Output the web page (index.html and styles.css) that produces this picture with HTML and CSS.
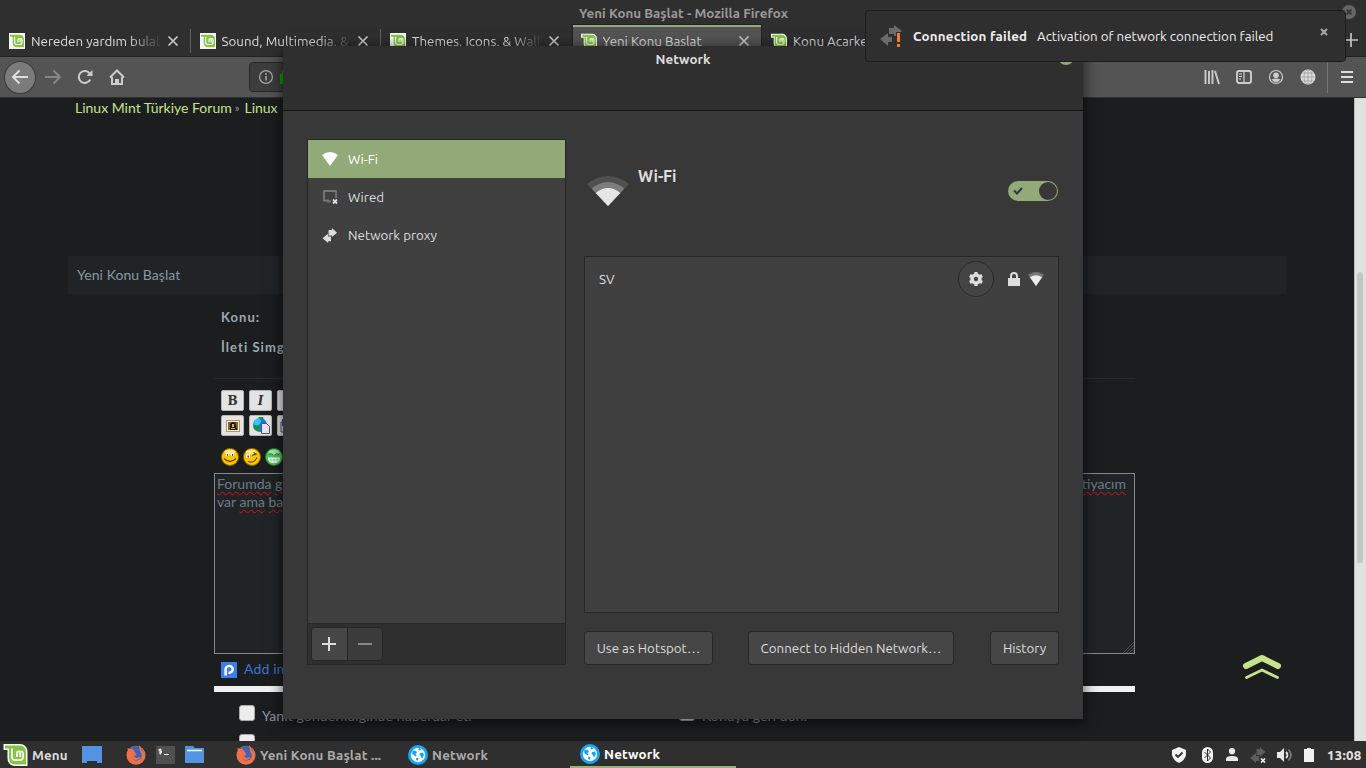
FILE: index.html
```html
<!DOCTYPE html>
<html lang="tr">
<head>
  <meta charset="UTF-8" />
  <title>Yeni Konu Başlat - Mozilla Firefox</title>
  <link rel="stylesheet" href="styles.css">
</head>
<body>
  <svg class="defs" width="0" height="0">
    <symbol id="mint" viewBox="0 0 24 24">
      <path d="M0 1h16c5 0 8 3 8 8v14H12c-5 0-8-3-8-8V7H0z" fill="#fff"/>
      <path d="M1.500 2.500h14.500c4 0 6.500 2.500 6.500 6.500v12.500H12c-4 0-6.500-2.500-6.500-6.500V5.500h-4z" fill="#86c543"/>
      <path d="M8.500 5.500v8.500c0 2 1.200 3.200 3.200 3.200h4.600c2 0 3.200-1.200 3.200-3.200V10.500c0-2.600-2.800-2.600-2.800-.2V14M16.700 10.300c0-2.600-3.200-2.600-3.200 0V14" fill="none" stroke="#fff" stroke-width="1.700"/>
    </symbol>
    <symbol id="x" viewBox="0 0 12 12"><path d="M1.500 1.500l9 9M10.500 1.500l-9 9" stroke="#c8c8c8" stroke-width="1.700"/></symbol>
    <symbol id="firefox" viewBox="0 0 20 20">
      <circle cx="10" cy="10.300" r="9.500" fill="#f0704a"/>
      <path d="M3.500 4C6 1 11 0 14 2c3 2 4 5 3 8s-4 6-7 5.500-5-2-4.500-4l4-1 1-2-3-1 1-2z" fill="#3d63b5"/>
      <path d="M1.500 3L4 4l3-.5-.5 2.500 3 1-2 2v2l3 2 4-1c-1 3-5 4-8 2S2 9 1.500 3zM13 0c2 2 3 4 3 7l1-2 1 4-1 4-2 2c1-4 1-6-1-9z" fill="#f0704a"/>
    </symbol>
    <symbol id="globe" viewBox="0 0 20 20">
      <circle cx="10" cy="10" r="10" fill="#16a5f3"/><circle cx="10" cy="10" r="7.200" fill="#fff"/>
      <path d="M4.500 5.500L8 6l1 1.500L7.500 9l1 1.500-1 1L5 9.500l-1-1zM11 3l2.500 1L12 5.500l-1.500-.5zM12 8l3-.5 1 2.500-1.500 3-1.500-.5V11l-1.500-1zM8.500 12.500l2 .8-1 2.700L8 15z" fill="#16a5f3"/>
    </symbol>
    <symbol id="arrows" viewBox="0 0 16 16">
      <path d="M6.500 2H10V0l5.500 5L10 9.500V8H6.500z"/><path d="M9 14H6v2L0 11l6-5v3h3z"/>
    </symbol>
  </svg>

  <div class="desktop">
    <main class="browser">
      <header class="titlebar"><span>Yeni Konu Başlat - Mozilla Firefox</span></header>
      <nav class="tabs">
        <div class="tab"><i class="fav"><svg><use href="#mint"/></svg></i><span class="fade">Nereden yardım bulab</span><svg class="close"><use href="#x"/></svg></div>
        <div class="tab"><i class="fav"><svg><use href="#mint"/></svg></i><span class="fade">Sound, Multimedia, &amp;</span><svg class="close"><use href="#x"/></svg></div>
        <div class="tab plain"><i class="fav"><svg><use href="#mint"/></svg></i><span class="fade">Themes, Icons, &amp; Wall</span><svg class="close"><use href="#x"/></svg></div>
        <div class="tab active"><i class="fav clear"><svg><use href="#mint"/></svg></i><span class="fade">Yeni Konu Başlat</span><svg class="close"><use href="#x"/></svg></div>
        <div class="tab plain"><i class="fav clear"><svg><use href="#mint"/></svg></i><span>Konu Açarken</span></div>
        <svg class="newtab" viewBox="0 0 14 14"><path d="M7 0v14M0 7h14" stroke="#c4c4c4" stroke-width="1.700"/></svg>
      </nav>
      <div class="toolbar">
        <div class="back"><svg width="18" height="16" viewBox="0 0 18 16"><path d="M17 8H2M8.500 1.500L2 8l6.500 6.500" fill="none" stroke="#ddd" stroke-width="2"/></svg></div>
        <svg class="fwd" width="18" height="16" viewBox="0 0 18 16"><path d="M1 8h15M9.500 1.500L16 8l-6.500 6.500" fill="none" stroke="#858585" stroke-width="2"/></svg>
        <svg class="reload" width="16" height="16" viewBox="0 0 16 16"><path d="M13.200 10.500A6 6 0 1 1 13 5" fill="none" stroke="#ccc" stroke-width="2"/><path d="M15.500 1v6h-6z" fill="#ccc"/></svg>
        <svg class="home" width="16" height="16" viewBox="0 0 16 16"><path d="M1 8.500L8 1.500l7 7M3 8v7h10V8" fill="none" stroke="#ccc" stroke-width="2"/><path d="M6 15v-5h4v5" fill="#ccc"/></svg>
        <div class="url"><svg width="14" height="14" viewBox="0 0 14 14"><circle cx="7" cy="7" r="6.400" fill="none" stroke="#aaa" stroke-width="1.200"/><path d="M7 6v4.500M7 3v1.700" stroke="#aaa" stroke-width="1.500"/></svg><svg width="14" height="16" viewBox="0 0 14 16"><path d="M0 5h2V2h8v3h3v10H0z" fill="#12a004"/></svg></div>
        <div class="tools">
          <svg width="16" height="16" viewBox="0 0 16 16"><path d="M1.500 1v14M5 2v13M8.500 1v14M11 2l4 13" stroke="#ccc" stroke-width="1.900"/></svg>
          <svg width="16" height="16" viewBox="0 0 16 16"><rect x="1" y="2" width="14" height="12" rx="2" fill="none" stroke="#ccc" stroke-width="1.900"/><path d="M8 2v12M3 5h3M3 7.500h3M3 10h2" stroke="#ccc" stroke-width="1.200"/></svg>
          <svg width="16" height="16" viewBox="0 0 16 16"><circle cx="8" cy="8" r="6.500" fill="none" stroke="#ccc" stroke-width="1.200"/><circle cx="8" cy="6.300" r="2.800" fill="#ccc"/><path d="M3.500 10.500q4.500-2 9 0-4.500 5.500-9 0z" fill="#ccc"/></svg>
          <svg width="16" height="16" viewBox="0 0 16 16"><circle cx="8" cy="8" r="7.500" fill="#dcdcdc"/><path d="M8 0v16M0 8h16M2 4h12M2 12h12" stroke="#999" stroke-width=".7"/><ellipse cx="8" cy="8" rx="4" ry="7.500" fill="none" stroke="#999" stroke-width=".7"/></svg>
          <i class="sep"></i>
          <svg width="14" height="14" viewBox="0 0 14 14"><path d="M1 2h12M1 7h12M1 12h12" stroke="#ddd" stroke-width="2"/></svg>
        </div>
      </div>
      <div class="view">
        <div class="forum">
          <div class="crumbs"><span>Linux Mint Türkiye Forum</span><small>»</small><span>Linux</span></div>
          <h3 class="heading"><span>Yeni Konu Başlat</span></h3>
          <form class="post">
            <div class="field">Konu:</div>
            <div class="field">İleti Simgesi:</div>
            <hr>
            <div class="bbc">
              <b class="btn serif">B</b><b class="btn serif ital">I</b><b class="btn"></b>
            </div>
            <div class="bbc">
              <b class="btn"><svg width="14" height="12" viewBox="0 0 14 12"><rect x=".5" y=".5" width="13" height="11" fill="#fff8ea" stroke="#c98b56"/><path d="M2 2h10v8H2z" fill="#6d6b36"/><path d="M4 10V4l2-2h3l2 8z" fill="#211b10"/><path d="M6 4h2v3H6zM5 8h4v1H5z" fill="#d2ad73"/></svg></b>
              <b class="btn"><svg width="18" height="18" viewBox="0 0 18 18"><circle cx="8" cy="8" r="7" fill="#1378ef"/><path d="M1 7l3-5 4-1 1 4-3 4z" fill="#35c4f2"/><path d="M6 0l5 0 1 3-4-1zM1 10l4-2 3 3-2 3-3-1z" fill="#169a20"/><path d="M9.500 6.500h5l3 3v7h-8z" fill="#e4e4ff" stroke="#555"/></svg></b>
              <b class="btn"><svg width="18" height="14" viewBox="0 0 18 14"><path d="M1 3h8v10H1z" fill="#dde" stroke="#555"/><path d="M2 0h7v7H2z" fill="#2050cf"/></svg></b>
            </div>
            <div class="smileys">
              <svg viewBox="0 0 18 18"><circle cx="9" cy="9" r="8.500" fill="#ffc400" stroke="#8f6300"/><ellipse cx="9" cy="4" rx="5.500" ry="2.500" fill="#ffe583"/><path d="M5 5h3v3H5zM10 5h3v3h-3z" fill="#fff"/><path d="M6 6h1v2H6zM11 6h1v2h-1z" fill="#704300"/><path d="M3 10.500q6 6 12 0" fill="none" stroke="#704300" stroke-width="1.200"/></svg>
              <svg viewBox="0 0 18 18"><circle cx="9" cy="9" r="8.500" fill="#ffc400" stroke="#8f6300"/><ellipse cx="8" cy="4" rx="5" ry="2.500" fill="#ffe583"/><path d="M3 6.500h4v3.500H3z" fill="#fff"/><path d="M4.500 7.500h1.500v2H4.500z" fill="#704300"/><path d="M9 7.500l4-1.500-2.500-1.500M5 13.500q6 2.500 9-4" fill="none" stroke="#704300" stroke-width="1.200"/></svg>
              <svg viewBox="0 0 18 18"><circle cx="9" cy="9" r="8.500" fill="#47c95c" stroke="#20742d"/><ellipse cx="9" cy="4" rx="5.500" ry="2.500" fill="#a4e8ab"/><path d="M3 9.500h12q0 5.500-6 5.500t-6-5.500z" fill="#fff"/><path d="M4 7q2-3 4 0M10 7q2-3 4 0" fill="none" stroke="#29813a"/><path d="M6 10v4M9 10v5M12 10v4M4 12h10" fill="none" stroke="#77bb80" stroke-width=".6"/></svg>
            </div>
            <div class="message">
              <p><span><u>Forumda</u> <u>g</u></span><u>tiyacım</u></p>
              <p><span>var <u>ama</u> <u>ba</u></span></p>
              <svg class="grip" width="11" height="11" viewBox="0 0 11 11"><path d="M0 11L11 0M3 11l8-8M6 11l5-5M9 11l2-2" stroke="#555" stroke-width=".8"/></svg>
            </div>
            <div class="addimg"><svg width="16" height="16" viewBox="0 0 16 16"><path d="M0 0h16v16H0z" fill="#3b7ded"/><path d="M4.600 13.500V7.500a3.600 3.400 0 1 1 3.600 3.200H7.500" fill="none" stroke="#fff" stroke-width="2.400"/></svg><span>Add image to post</span></div>
            <div class="whitebar"></div>
            <div class="options">
              <label><i class="check"></i><span>Yanıt gönderildiğinde haberdar et.</span></label>
              <label><i class="check"></i><span>Konuya geri dön.</span></label>
              <label><i class="check"></i></label>
            </div>
          </form>
          <svg class="totop" width="40" height="26" viewBox="0 0 40 26"><path d="M4 12L20 4l16 8" fill="none" stroke="#c5e38b" stroke-width="6" stroke-linecap="round" stroke-linejoin="round"/><path d="M4.500 23.500L20 16l15.500 7.500" fill="none" stroke="#c5e38b" stroke-width="2.800" stroke-linecap="round"/></svg>
        </div>
        <div class="scroll"><i></i></div>
      </div>
    </main>

    <footer class="panel">
      <div class="menu"><svg width="25" height="24"><use href="#mint"/></svg><span>Menu</span></div>
      <div class="launchers">
        <svg width="20" height="17" viewBox="0 0 20 17"><path d="M0 0h20v17h-5v-2H5v2H0z" fill="#5294e2"/></svg>
        <svg width="20" height="20"><use href="#firefox"/></svg>
        <svg width="19" height="18" viewBox="0 0 19 18"><path d="M0 0h19v18H0z" fill="#505050"/><path d="M5.500 3.500H3V5h2.500v2H3M4.300 2.500v6M8 8.500h5" fill="none" stroke="#fff"/></svg>
        <svg width="19" height="17" viewBox="0 0 19 17"><path d="M0 0h8l2 2h9v15H0z" fill="#5294e2"/><path d="M2 4.500h15" stroke="#fff" stroke-width="1.500"/></svg>
      </div>
      <div class="task"><svg width="20" height="20"><use href="#firefox"/></svg><span>Yeni Konu Başlat ...</span></div>
      <div class="task"><svg width="20" height="20"><use href="#globe"/></svg><span>Network</span></div>
      <div class="task current"><svg width="20" height="20"><use href="#globe"/></svg><span>Network</span></div>
      <div class="tray">
        <svg width="14" height="16" viewBox="0 0 14 16"><path d="M7 0l7 3v5q-1 5-7 8Q1 13 0 8V3z" fill="#f2f2f2"/><path d="M3.500 7.500L6 10l4.500-4.500" fill="none" stroke="#2f2f2f" stroke-width="1.800"/></svg>
        <svg class="bt" width="11" height="16" viewBox="0 0 11 16"><rect width="11" height="16" rx="5.500" fill="#f2f2f2"/><path d="M2.500 5l6 6-3 3V2l3 3-6 6" fill="none" stroke="#2f2f2f"/></svg>
        <svg class="user" width="12" height="13" viewBox="0 0 12 13"><circle cx="6" cy="3.200" r="3.100" fill="#e8e8e8"/><path d="M0 13v-2q0-3 6-3t6 3v2z" fill="#e8e8e8"/></svg>
        <svg width="16" height="16" viewBox="0 0 16 16"><use href="#arrows" fill="#5d5d5d"/><path d="M9 10h7v6H9z" fill="#2f2f2f"/><path d="M11 11.500l4 4M15 11.500l-4 4" stroke="#eee" stroke-width="1.700"/></svg>
        <svg width="16" height="14" viewBox="0 0 16 14"><path d="M0 4h3l4-4v14l-4-4H0z" fill="#e8e8e8"/><path d="M9 4q3 3 0 6" fill="none" stroke="#e8e8e8" stroke-width="1.800"/><path d="M11.500 1.500q5 5.500 0 11" fill="none" stroke="#777" stroke-width="1.700"/></svg>
        <svg width="10" height="14" viewBox="0 0 10 14"><path d="M0 1h3V0h4v1h3v13H0z" fill="#f2f2f2"/></svg>
        <b class="clock">13:08</b>
      </div>
    </footer>

    <section class="dialog">
      <header>Network<i></i></header>
      <div class="content">
        <aside>
          <ul>
            <li class="sel"><svg width="16" height="14" viewBox="0 0 16 14"><path d="M0 3q8-6 16 0L8 14z" fill="#fff"/></svg><span>Wi-Fi</span></li>
            <li><svg width="16" height="16" viewBox="0 0 16 16"><path d="M9 12.500H6v-1H2V2h12v7" fill="none" stroke="#777" stroke-width="1.800"/><path d="M11 10.500l4 4M15 10.500l-4 4" stroke="#ddd" stroke-width="1.800"/></svg><span>Wired</span></li>
            <li><svg width="16" height="15" fill="#ddd"><use href="#arrows"/></svg><span>Network proxy</span></li>
          </ul>
          <div class="edit"><button><svg width="14" height="14" viewBox="0 0 14 14"><path d="M7 0v14M0 7h14" stroke="#ddd" stroke-width="2"/></svg></button><button class="off"><svg width="14" height="14" viewBox="0 0 14 14"><path d="M0 7h14" stroke="#888" stroke-width="2"/></svg></button></div>
        </aside>
        <div class="main">
          <div class="device">
            <svg width="42" height="30" viewBox="0 0 42 30"><path d="M0 8Q21-8 42 8L21 30z" fill="#505050"/><path d="M4.500 12.500q16.500-13 33 0L21 30z" fill="#7d7d7d"/><path d="M8.700 17q12.300-10 24.600 0L21 30z" fill="#e5e5e5"/></svg>
            <strong>Wi-Fi</strong>
            <div class="switch"><svg width="10" height="8" viewBox="0 0 10 8"><path d="M1 3.500l3 3L9 1" fill="none" stroke="#2f3946" stroke-width="2"/></svg><i></i></div>
          </div>
          <div class="aps">
            <div class="ap"><span>SV</span>
              <div class="gear"><svg width="14" height="14" viewBox="0 0 14 14"><circle cx="7" cy="7" r="4" fill="none" stroke="#ddd" stroke-width="3.600"/><path d="M7 0v3M7 11v3M.9 3.500l2.600 1.500M10.500 9l2.600 1.500M13.100 3.500L10.500 5M3.500 9L.9 10.500" stroke="#ddd" stroke-width="3.200"/></svg></div>
              <svg class="lock" width="12" height="14" viewBox="0 0 12 14"><path d="M0 6h12v8H0z" fill="#ddd"/><path d="M3 7V4a3 3 0 0 1 6 0v3" fill="none" stroke="#ddd" stroke-width="2"/></svg>
              <svg width="16" height="14" viewBox="0 0 16 14"><path d="M0 3q8-6 16 0L8 14z" fill="#777"/><path d="M2 5.300q6-4 12 0L8 14z" fill="#eee"/></svg>
            </div>
          </div>
          <div class="actions"><button class="b1">Use as Hotspot…</button><button class="b2">Connect to Hidden Network…</button><button class="b3">History</button></div>
        </div>
      </div>
    </section>

    <div class="winclose"><svg width="14" height="14" viewBox="0 0 14 14"><circle cx="7" cy="7" r="7" fill="#666"/><path d="M4.500 4.500l5 5M9.500 4.500l-5 5" stroke="#2f2f2f" stroke-width="1.600"/></svg></div>
    <div class="notify">
      <svg width="24" height="24" viewBox="0 0 24 24"><path d="M9 4h5V1l8 6-5 5h-3v-2H9zM12 18H8v4L0 15l8-6v4h4z" fill="#6b6b6b"/><path d="M16 8h6v16h-6z" fill="#2f2f2f"/><path d="M17 9h3v9h-3zM17 20h3v3h-3z" fill="#f27835"/></svg>
      <b>Connection failed</b><span>Activation of network connection failed</span>
      <svg class="nclose" width="8" height="8" viewBox="0 0 8 8"><path d="M1 1l6 6M7 1L1 7" stroke="#aaa" stroke-width="2"/></svg>
    </div>
  </div>
</body>
</html>
```
FILE: styles.css
```css
* {
  box-sizing: border-box;
}
body {
  margin: 0;
  overflow: hidden;
  background: #1c1d1f;
  font-family: Ubuntu, "Noto Sans", sans-serif;
  font-size: 13.350px;
  color: #ddd;
}
svg {
  display: block;
  flex: none;
}
.defs {
  position: absolute;
}
.desktop {
  position: relative;
  width: 1366px;
  height: 768px;
  display: flex;
  flex-direction: column;
}
span, b {
  white-space: nowrap;
}
.browser {
  height: 741px;
  display: flex;
  flex-direction: column;
  overflow: hidden;
}
.titlebar {
  height: 24px;
  background: #2f2f2f;
  color: #999;
  font-weight: 600;
  line-height: 28px;
  padding-left: 1px;
  text-align: center;
}
.tabs {
  height: 33px;
  background: #2f2f2f;
  border-bottom: 1px solid #202020;
  display: flex;
  align-items: center;
}
.tab {
  width: 190.500px;
  height: 32px;
  flex: none;
  display: flex;
  align-items: center;
  padding: 2px 12px 0 9px;
  position: relative;
}
.tab span {
  padding-top: 1px;
}
.tab::after {
  content: "";
  position: absolute;
  right: 0;
  top: 5px;
  height: 24px;
  border-right: 1px solid #606060;
}
.tab.plain::after, .tab.active::after {
  display: none;
}
.active {
  background: #545454;
  border: 1px solid #202020;
  border-bottom: 0;
  box-shadow: inset 0 2px #92a978;
  padding: 1px 11px 0 8px;
}
.fav {
  width: 16px;
  height: 16px;
  background: #f4f4f4;
  flex: none;
  margin-right: 6px;
}
.fav svg {
  width: 16px;
  height: 16px;
}
.clear {
  background: none;
}
.fade {
  width: 131px;
  overflow: hidden;
  mask-image: linear-gradient(90deg, #000 75%, transparent);
}
.active .fade {
  mask-image: none;
}
.close {
  width: 12px;
  height: 12px;
  margin-left: auto;
}
.newtab {
  width: 14px;
  height: 14px;
  margin-left: auto;
  margin-right: 8px;
}
.toolbar {
  height: 41px;
  background: #545454;
  border-bottom: 1px solid #303030;
  display: flex;
  align-items: center;
  padding-left: 4px;
}
.back {
  width: 32px;
  height: 33px;
  border-radius: 50%;
  border: 1px solid #393939;
  background: #7b7b7b;
  display: flex;
  align-items: center;
  justify-content: center;
}
.fwd {
  margin-left: 8px;
}
.reload {
  margin-left: 15px;
}
.home {
  margin-left: 16px;
}
.url {
  width: 800px;
  height: 30px;
  margin-left: 124px;
  background: #3d3d3d;
  border: 1px solid #282828;
  border-radius: 4px;
  padding-left: 9px;
  display: flex;
  align-items: center;
  gap: 7px;
}
.tools {
  display: flex;
  align-items: center;
  gap: 16px;
  margin-left: auto;
  margin-right: 12px;
}
.sep {
  height: 32px;
  border-left: 1px solid #777;
  margin: 0 -4px 0 -5px;
}
.view {
  flex: 1;
  display: flex;
  min-height: 0;
}
.forum {
  width: 1354px;
  position: relative;
  padding: 0 68px;
  font-family: "Proxima Nova", Lato, sans-serif;
  font-size: 14px;
}
.crumbs {
  height: 158px;
  padding-left: 7px;
  color: #c5e38b;
  line-height: 19px;
  display: flex;
}
.crumbs small {
  margin: 0 5px 0 3px;
  font-size: 11px;
  color: #8998a1;
}
.heading {
  margin: 0;
  height: 38px;
  line-height: 37px;
  padding-left: 9px;
  background: #202427;
  font-weight: 400;
  font-size: 14px;
  color: #8998a1;
}
.heading span {
  letter-spacing: 0.060px;
}
.post {
  width: 921px;
  margin: 8px 0 0 146px;
}
.field {
  height: 30px;
  line-height: 30px;
  padding-left: 7px;
  color: #9aa9b3;
  font-weight: 700;
  font-size: 13px;
  letter-spacing: 1.050px;
}
.post hr {
  border: 0;
  border-top: 1px solid #27292b;
  margin: 16px 0 11px;
}
.bbc {
  display: flex;
  gap: 5px;
  padding-left: 7px;
  margin-bottom: 4px;
}
.btn {
  width: 23px;
  height: 21px;
  border: 1px solid #b5b5b5;
  border-radius: 2px;
  background: #e4e4e4;
  display: flex;
  align-items: center;
  justify-content: center;
  color: #333;
}
.serif {
  font: 900 12px "DejaVu Serif", serif;
}
.ital {
  font-style: italic;
  transform: skewX(0);
}
.smileys {
  display: flex;
  gap: 4px;
  padding: 8px 0 7px 7px;
}
.smileys svg {
  width: 18px;
  height: 18px;
}
.message {
  height: 181px;
  border: 1px solid #84898c;
  background: #202427;
  color: #6f7b83;
  padding: 1px 8px 0 2px;
  position: relative;
}
.message p {
  display: flex;
  justify-content: space-between;
  margin: 0;
  line-height: 18px;
}
.message u {
  text-decoration: underline wavy #e01010 1px;
  text-underline-offset: 2px;
}
.grip {
  position: absolute;
  right: 0;
  bottom: 0;
}
.addimg {
  display: flex;
  align-items: center;
  gap: 7px;
  height: 32px;
  padding-left: 7px;
  color: #3b75d3;
}
.addimg span {
  padding-bottom: 3px;
  letter-spacing: 0.150px;
}
.whitebar {
  height: 6px;
  background: #f0f0f0;
}
.options {
  display: flex;
  flex-wrap: wrap;
  padding: 13px 0 0 25px;
}
.options label {
  display: flex;
  width: 440px;
  height: 29px;
  color: #8998a1;
}
.options span {
  margin: 2px 0 0 7px;
  letter-spacing: 0.110px;
}
.check {
  width: 16px;
  height: 16px;
  border-radius: 3px;
  background: #ececec;
  border: 1px solid #aaa;
}
.totop {
  position: absolute;
  left: 1242px;
  top: 556px;
}
.scroll {
  width: 12px;
  background: #e1e1df;
  border-left: 1px solid #bbb;
  padding: 174px 2px 0;
}
.scroll i {
  display: block;
  width: 6px;
  height: 291px;
  border-radius: 3px;
  background: #c4c6c5;
}
.panel {
  height: 27px;
  background: #2f2f2f;
  display: flex;
  align-items: center;
  font-weight: 700;
  padding-left: 3px;
}
.menu {
  width: 79px;
  display: flex;
  align-items: center;
  gap: 4px;
}
.menu span {
  padding-top: 1px;
  letter-spacing: 0.150px;
}
.launchers {
  width: 154px;
  display: flex;
  align-items: center;
  gap: 10px;
}
.launchers svg:first-child {
  margin-right: 14px;
}
.task {
  width: 172px;
  display: flex;
  align-items: center;
  gap: 4px;
  color: #aaa;
}
.current {
  width: 166px;
  height: 27px;
  margin-left: -10px;
  padding-left: 10px;
  border-bottom: 2px solid #92b372;
  color: #fff;
}
.task span {
  padding-top: 1px;
  letter-spacing: 0.180px;
}
.current span {
  padding-top: 2px;
}
.tray {
  margin-left: auto;
  display: flex;
  align-items: center;
  padding-right: 4px;
  gap: 11px;
}
.bt {
  margin: 0 2px 0 5px;
}
.tray .user {
  margin-right: 1px;
}
.tray .clock {
  width: 35px;
  padding-top: 1px;
  margin-left: 2px;
  letter-spacing: 0.200px;
}
.dialog {
  position: absolute;
  left: 283px;
  top: 46px;
  width: 800px;
  height: 673px;
  background: #383838;
  box-shadow: 0 3px 14px rgba(0, 0, 0, 0.7);
}
.dialog header {
  height: 65px;
  background: #2f2f2f;
  border-bottom: 1px solid #151515;
  text-align: center;
  font-weight: 700;
  line-height: 28px;
  position: relative;
}
.dialog header i {
  position: absolute;
  left: 775px;
  top: 3px;
  width: 16px;
  height: 16px;
  border-radius: 50%;
  background: #92a978;
}
.content {
  display: flex;
  gap: 18px;
  padding: 28px 24px 0;
}
aside {
  width: 259px;
  height: 526px;
  border: 1px solid #272727;
  background: #404040;
  display: flex;
  flex-direction: column;
}
aside ul {
  list-style: none;
  margin: 0;
  padding: 0;
  flex: 1;
}
aside li {
  display: flex;
  align-items: center;
  gap: 10px;
  height: 38px;
  padding-left: 14px;
}
.sel {
  background: #92a978;
  color: #fff;
}
.edit {
  height: 41px;
  border-top: 1px solid #272727;
  background: #2f2f2f;
  display: flex;
  padding: 3px;
}
button {
  border: 1px solid #272727;
  border-radius: 3px;
  background: #464646;
  color: #ddd;
  font: inherit;
  height: 34px;
  padding: 0;
  display: flex;
  align-items: center;
  justify-content: center;
  white-space: nowrap;
}
.edit button {
  width: 37px;
  padding-right: 1px;
  border-radius: 3px 0 0 3px;
}
.edit .off {
  width: 36px;
  margin-left: -1px;
  background: #3b3b3b;
  border-radius: 0 3px 3px 0;
}
.main {
  width: 475px;
}
.device {
  height: 117px;
  display: flex;
  padding: 37px 1px 0 3px;
}
.device strong {
  font-size: 16px;
  line-height: 22px;
  margin: -11px 0 0 9px;
  letter-spacing: -0.100px;
}
.switch {
  width: 50px;
  height: 20px;
  margin: 5px 0 0 auto;
  border-radius: 10px;
  background: #92a978;
  display: flex;
  align-items: center;
  justify-content: space-between;
  padding: 0 1px 0 5px;
}
.switch i {
  width: 18px;
  height: 18px;
  border-radius: 50%;
  background: #383838;
}
.aps {
  height: 357px;
  border: 1px solid #272727;
  background: #404040;
}
.ap {
  display: flex;
  align-items: center;
  height: 44px;
  padding: 0 14px;
}
.gear {
  width: 36px;
  height: 36px;
  margin-left: auto;
  margin-right: 14px;
  border: 1px solid #292929;
  border-radius: 50%;
  background: #444;
  display: flex;
  align-items: center;
  justify-content: center;
}
.lock {
  margin-right: 8px;
}
.actions {
  display: flex;
  margin-top: 18px;
}
.b1 {
  width: 129px;
}
.b2 {
  width: 206px;
  margin: 0 36px 0 35px;
}
.b3 {
  width: 69px;
}
.winclose {
  position: absolute;
  left: 1342px;
  top: 5px;
}
.notify {
  position: absolute;
  left: 865px;
  top: 10px;
  width: 481px;
  height: 52px;
  background: #2f2f2f;
  border: 1px solid #1d1d1d;
  border-radius: 4px;
  display: flex;
  align-items: center;
  padding: 0 17px 0 14px;
  color: #eee;
}
.notify b {
  width: 115px;
  margin-left: 9px;
  letter-spacing: 0.200px;
}
.notify span {
  margin-left: 9px;
}
.nclose {
  margin: -9px 0 0 auto;
}
```
